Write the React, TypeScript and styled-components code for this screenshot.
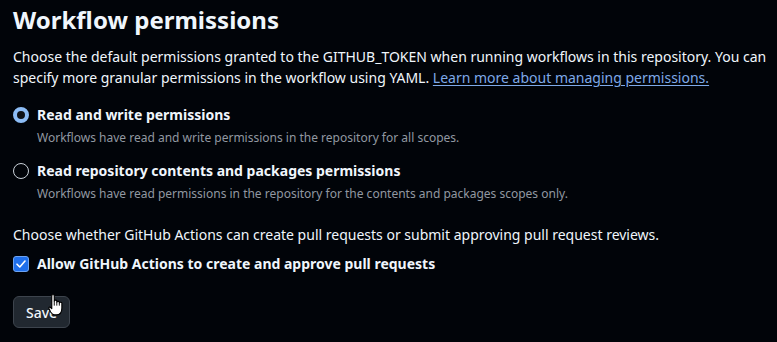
import React from "react";
import styled, { createGlobalStyle } from "styled-components";

const Global = createGlobalStyle`
  html, body { margin: 0; padding: 0; background: #010409; }
  body { font-family: "Noto Sans", "Open Sans", sans-serif; color: #f0f6fc; }
`;

const Page = styled.div`
  width: 777px;
  height: 342px;
  box-sizing: border-box;
  padding: 4px 6px 0 13px;
  background: #010409;
  overflow: hidden;
`;

const Title = styled.h2`
  margin: 0;
  font-size: 24px;
  line-height: 32px;
  font-weight: 700;
  color: #f0f6fc;
`;

const Para = styled.p`
  margin: 10px 0 0 0;
  font-size: 14px;
  line-height: 21px;
  color: #f0f6fc;
`;

const Link = styled.a`
  color: #7ea9e8;
  text-decoration: underline;
  text-underline-offset: 2px;
`;

const Options = styled.div`
  display: flex;
  flex-direction: column;
  gap: 13px;
  margin-top: 16px;
`;

const Option = styled.label`
  display: grid;
  grid-template-columns: 16px 1fr;
  column-gap: 8px;
  align-items: start;
`;

const Radio = styled.span<{ $checked?: boolean }>`
  width: 16px;
  height: 16px;
  box-sizing: border-box;
  border-radius: 50%;
  margin-top: 3px;
  border: ${(p) => (p.$checked ? "4px solid #8cbcf5" : "1px solid #c9d1d9")};
  background: ${(p) => (p.$checked ? "#0d1117" : "transparent")};
`;

const OptText = styled.div`
  display: flex;
  flex-direction: column;
`;

const OptLabel = styled.span`
  font-size: 14px;
  line-height: 21px;
  font-weight: 700;
  color: #f0f6fc;
`;

const OptDesc = styled.span`
  font-size: 12px;
  line-height: 18px;
  color: #9198a1;
  margin-top: 4px;
`;

const Para2 = styled(Para)`
  margin-top: 21px;
`;

const CheckRow = styled.label`
  display: flex;
  align-items: center;
  gap: 8px;
  margin-top: 8px;
`;

const CheckBox = styled.span`
  width: 16px;
  height: 16px;
  box-sizing: border-box;
  border-radius: 3px;
  background: #1f6feb;
  border: 1px solid #6ea3f0;
  display: flex;
  align-items: center;
  justify-content: center;
`;

const ButtonWrap = styled.div`
  position: relative;
  margin-top: 22px;
  width: 57px;
`;

const Button = styled.button`
  height: 32px;
  padding: 0 12px;
  border-radius: 6px;
  border: 1px solid #3d444d;
  background: #212830;
  color: #f0f6fc;
  font-family: "Noto Sans", "Open Sans", sans-serif;
  font-size: 14px;
  font-weight: 500;
  width: 57px;
`;

const Cursor = styled.svg`
  position: absolute;
  left: 35px;
  top: -3px;
`;

export default function App() {
  return (
    <Page>
      <Global />
      <Title>Workflow permissions</Title>
      <Para>
        Choose the default permissions granted to the GITHUB_TOKEN when running workflows in this repository. You can
        specify more granular permissions in the workflow using YAML. <Link>Learn more about managing permissions.</Link>
      </Para>
      <Options>
        <Option>
          <Radio $checked />
          <OptText>
            <OptLabel>Read and write permissions</OptLabel>
            <OptDesc>Workflows have read and write permissions in the repository for all scopes.</OptDesc>
          </OptText>
        </Option>
        <Option>
          <Radio />
          <OptText>
            <OptLabel>Read repository contents and packages permissions</OptLabel>
            <OptDesc>Workflows have read permissions in the repository for the contents and packages scopes only.</OptDesc>
          </OptText>
        </Option>
      </Options>
      <Para2>Choose whether GitHub Actions can create pull requests or submit approving pull request reviews.</Para2>
      <CheckRow>
        <CheckBox>
          <svg width="12" height="12" viewBox="0 0 12 12">
            <path d="M2 6.2 L4.8 9 L10 3" fill="none" stroke="#ffffff" strokeWidth="1.6" strokeLinecap="round" strokeLinejoin="round" />
          </svg>
        </CheckBox>
        <OptLabel>Allow GitHub Actions to create and approve pull requests</OptLabel>
      </CheckRow>
      <ButtonWrap>
        <Button>Save</Button>
        <Cursor width="19" height="23" viewBox="0 0 16 20">
          <path
            d="M3 2.2C3 1 5.2 1 5.2 2.2V7C5.2 6 7.4 6 7.4 7V8C7.4 7 9.6 7 9.6 8V8.8C9.6 7.8 11.8 7.8 11.8 8.8V13C11.8 16.5 10 19 7 19H5.5C3.8 19 3 18 2 16.5L0.6 13.5C0.2 12.5 1.2 11.8 2 12.6L3 13.6Z"
            fill="#ffffff"
            stroke="#000000"
            strokeWidth="1"
            strokeLinejoin="round"
          />
          <path d="M5.2 7V11M7.4 8V11M9.6 8.8V11" stroke="#000000" strokeWidth="0.8" fill="none" />
        </Cursor>
      </ButtonWrap>
    </Page>
  );
}
